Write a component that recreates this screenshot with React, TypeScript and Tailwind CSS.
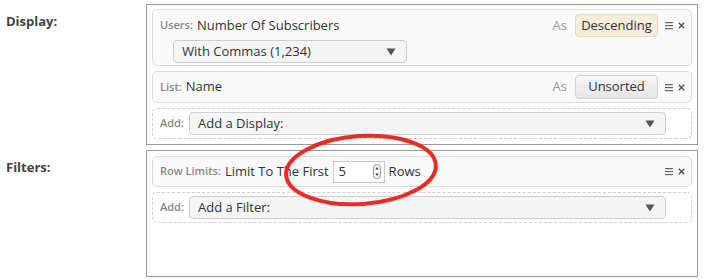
const FONT = "font-['Open_Sans',Arial,sans-serif]";

function Caret() {
  return (
    <svg width="10" height="8" viewBox="0 0 10 8" className="shrink-0">
      <path d="M0.5 0.5 H9.5 L5 7.5 Z" fill="#555" />
    </svg>
  );
}

function Controls() {
  return (
    <div className="flex items-center gap-[5px]">
      <svg width="8" height="9" viewBox="0 0 8 9">
        <rect x="0" y="1" width="8" height="1.2" fill="#666" />
        <rect x="0" y="4" width="8" height="1.2" fill="#666" />
        <rect x="0" y="7" width="8" height="1.2" fill="#666" />
      </svg>
      <svg width="7" height="7" viewBox="0 0 7 7">
        <path d="M0.8 0.8 L6.2 6.2 M6.2 0.8 L0.8 6.2" stroke="#555" strokeWidth="1.4" />
      </svg>
    </div>
  );
}

function Select({ label, className }: { label: string; className: string }) {
  return (
    <div
      className={`flex h-[23px] items-center justify-between rounded-[4px] border border-[#cfcfcf] bg-[#f5f5f5] pl-[8px] pr-[10px] text-[13px] text-[#333] ${className}`}
    >
      <span>{label}</span>
      <Caret />
    </div>
  );
}

function Tag({ text }: { text: string }) {
  return (
    <span className="mr-[4px] text-[11px] font-semibold text-[#888]">{text}</span>
  );
}

function SortButton({ label, active }: { label: string; active?: boolean }) {
  return (
    <div
      className={
        active
          ? "flex h-[23px] w-[83px] items-center justify-center rounded-[4px] border border-[#e6d9c4] bg-[#f8ecdb] text-[13px] text-[#333]"
          : "flex h-[24px] w-[83px] items-center justify-center rounded-[4px] border border-[#d3d3d3] bg-gradient-to-b from-[#f7f7f7] to-[#e5e5e5] text-[13px] text-[#333]"
      }
    >
      {label}
    </div>
  );
}

function Card({ children }: { children: React.ReactNode }) {
  return (
    <div className="rounded-[5px] border border-[#dcdcdc] bg-[#fafafa] pl-[7px] pr-[6px]">
      {children}
    </div>
  );
}

function AddRow({ label }: { label: string }) {
  return (
    <div className="flex h-[31px] items-center rounded-[5px] border border-dashed border-[#d0d0d0] pl-[7px]">
      <Tag text="Add:" />
      <Select label={label} className="ml-[1px] w-[477px]" />
    </div>
  );
}

function NumberInput() {
  return (
    <div className="flex h-[22px] w-[52px] items-center justify-between border border-[#c8c8c8] bg-white pl-[5px] pr-[3px] text-[13px] text-[#333]">
      <span>5</span>
      <svg width="8" height="15" viewBox="0 0 8 15">
        <rect x="0.5" y="0.5" width="7" height="14" rx="3" fill="#f4f4f4" stroke="#999" />
        <path d="M2.3 5.5 L4 3 L5.7 5.5 Z" fill="#444" />
        <path d="M2.3 9.5 L4 12 L5.7 9.5 Z" fill="#444" />
      </svg>
    </div>
  );
}

export default function App() {
  return (
    <div className={`relative h-[280px] w-[720px] bg-white text-[#333] ${FONT}`}>
      <div className="grid grid-cols-[146px_552px] gap-y-[5px] pt-[4px]">
        <div className="pl-[6px] pt-[7px] text-[13px] font-bold leading-[20px] text-[#444]">
          Display:
        </div>
        <div className="flex flex-col gap-[5px] border border-[#9a9a9a] px-[5px] pb-[5px] pt-[4px]">
          <Card>
            <div className="flex h-[30px] items-center pt-[1px]">
              <Tag text="Users:" />
              <span className="text-[13px]">Number Of Subscribers</span>
              <span className="ml-auto mr-[8px] text-[13px] text-[#999]">As</span>
              <SortButton label="Descending" active />
              <div className="ml-[7px]">
                <Controls />
              </div>
            </div>
            <div className="pb-[2px] pl-[13px]">
              <Select label="With Commas (1,234)" className="w-[234px]" />
            </div>
          </Card>
          <Card>
            <div className="flex h-[30px] items-center">
              <Tag text="List:" />
              <span className="text-[13px]">Name</span>
              <span className="ml-auto mr-[8px] text-[13px] text-[#999]">As</span>
              <SortButton label="Unsorted" />
              <div className="ml-[7px]">
                <Controls />
              </div>
            </div>
          </Card>
          <AddRow label="Add a Display:" />
        </div>

        <div className="pl-[6px] pt-[7px] text-[13px] font-bold leading-[20px] text-[#444]">
          Filters:
        </div>
        <div className="flex h-[127px] flex-col gap-[5px] border border-[#9a9a9a] p-[5px]">
          <Card>
            <div className="flex h-[29px] items-center">
              <Tag text="Row Limits:" />
              <span className="mr-[4px] text-[13px]">Limit To The First</span>
              <NumberInput />
              <span className="ml-[4px] text-[13px]">Rows</span>
              <div className="ml-auto">
                <Controls />
              </div>
            </div>
          </Card>
          <AddRow label="Add a Filter:" />
        </div>
      </div>

      <svg
        className="pointer-events-none absolute left-[278px] top-[128px]"
        width="166"
        height="84"
        viewBox="0 0 166 84"
      >
        <ellipse
          cx="83"
          cy="42"
          rx="75"
          ry="34"
          transform="rotate(-4 83 42)"
          fill="none"
          stroke="#ec2b24"
          strokeWidth="4"
        />
      </svg>
    </div>
  );
}
